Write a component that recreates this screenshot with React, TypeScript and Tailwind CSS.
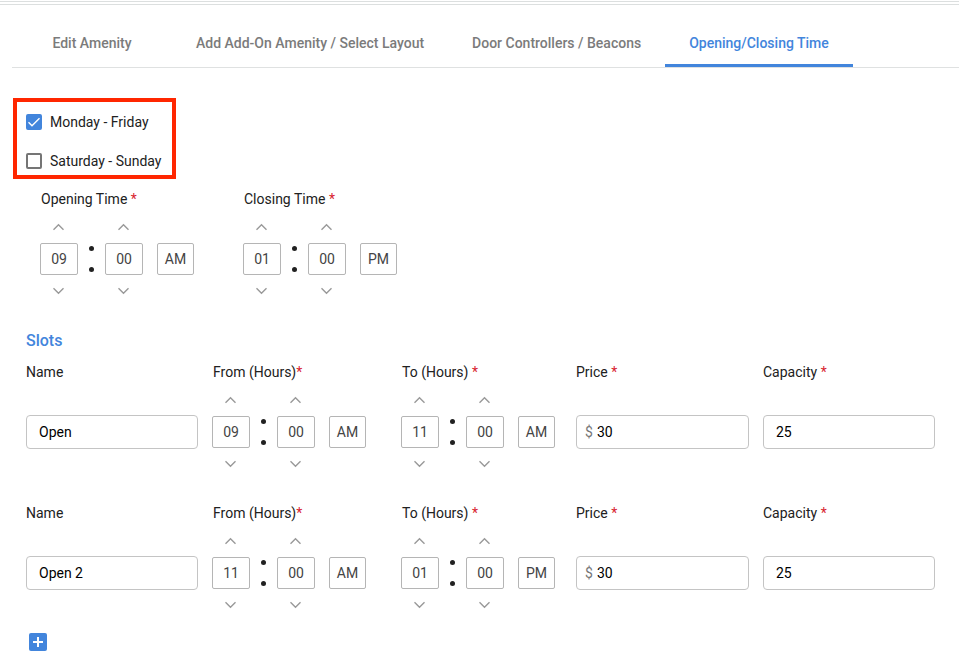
import { useId, useState } from "react"
import clsx from "clsx"

type Time = { hour: string; minute: string; meridiem: "AM" | "PM" }

interface Slot {
  name: string
  from: Time
  to: Time
  price: string
  capacity: string
}

const TABS = [
  "Edit Amenity",
  "Add Add-On Amenity / Select Layout",
  "Door Controllers / Beacons",
  "Opening/Closing Time",
]

const INITIAL_SLOTS: Slot[] = [
  {
    name: "Open",
    from: { hour: "09", minute: "00", meridiem: "AM" },
    to: { hour: "11", minute: "00", meridiem: "AM" },
    price: "30",
    capacity: "25",
  },
  {
    name: "Open 2",
    from: { hour: "11", minute: "00", meridiem: "AM" },
    to: { hour: "01", minute: "00", meridiem: "PM" },
    price: "30",
    capacity: "25",
  },
]

const pad = (n: number) => String(n).padStart(2, "0")

function Chevron({ down }: { down?: boolean }) {
  return (
    <svg width="12" height="8" viewBox="0 0 12 8" fill="none" stroke="#999" strokeWidth="1.4">
      <path d={down ? "M.5 1.3 5.5 6.3 10.5 1.3" : "M.5 6.8 5.5 1.8 10.5 6.8"} />
    </svg>
  )
}

interface SpinnerProps {
  label: string
  value: string
  min: number
  max: number
  onChange: (value: string) => void
}

function Spinner({ label, value, min, max, onChange }: SpinnerProps) {
  const step = (delta: number) => {
    const span = max - min + 1
    onChange(pad(((Number(value) - min + delta + span) % span) + min))
  }

  return (
    <div className="flex w-[38px] flex-col">
      <button
        type="button"
        aria-label={`Increase ${label}`}
        onClick={() => step(1)}
        className="flex h-8 items-center justify-center"
      >
        <Chevron />
      </button>
      <input
        aria-label={label}
        value={value}
        onChange={e => onChange(e.target.value)}
        className="h-8 w-full rounded-xs border border-[#b5b5b5] text-center text-sm text-[#444]"
      />
      <button
        type="button"
        aria-label={`Decrease ${label}`}
        onClick={() => step(-1)}
        className="flex h-8 items-center justify-center"
      >
        <Chevron down />
      </button>
    </div>
  )
}

interface TimeFieldProps {
  label: string
  tight?: boolean
  initial: Time
}

function TimeField({ label, tight, initial }: TimeFieldProps) {
  const [time, setTime] = useState(initial)

  return (
    <div role="group" aria-label={label}>
      <div className="pl-px">
        {label}
        {!tight && " "}
        <Required />
      </div>
      <div className="mt-0.5 flex h-24 items-center">
        <Spinner
          label={`${label} hour`}
          value={time.hour}
          min={1}
          max={12}
          onChange={hour => setTime({ ...time, hour })}
        />
        <div className="flex w-[27px] flex-col items-center gap-4">
          <span className="size-[5px] rounded-full bg-[#212121]" />
          <span className="size-[5px] rounded-full bg-[#212121]" />
        </div>
        <Spinner
          label={`${label} minute`}
          value={time.minute}
          min={0}
          max={59}
          onChange={minute => setTime({ ...time, minute })}
        />
        <button
          type="button"
          onClick={() => setTime({ ...time, meridiem: time.meridiem === "AM" ? "PM" : "AM" })}
          className="ml-3.5 h-8 w-[37px] rounded-xs border border-[#b5b5b5] text-[#444]"
        >
          {time.meridiem}
        </button>
      </div>
    </div>
  )
}

function Required() {
  return <span className="text-[#d8232f]">*</span>
}

interface TextFieldProps {
  label: string
  required?: boolean
  prefix?: string
  initial: string
}

function TextField({ label, required, prefix, initial }: TextFieldProps) {
  const id = useId()
  const [value, setValue] = useState(initial)

  return (
    <div className="pr-3.5">
      <label htmlFor={id} className="block">
        {label} {required && <Required />}
      </label>
      <div className="mt-0.5 flex h-24 items-center">
        <div
          className={clsx(
            "flex h-[34px] w-full items-center gap-1 rounded-sm border border-[#c4c4c4]",
            prefix ? "px-2" : "px-3"
          )}
        >
          {prefix && <span className="text-[#777]">{prefix}</span>}
          <input
            id={id}
            value={value}
            onChange={e => setValue(e.target.value)}
            className="w-full min-w-0 text-black outline-none"
          />
        </div>
      </div>
    </div>
  )
}

function Checkbox({ label, defaultChecked }: { label: string; defaultChecked?: boolean }) {
  return (
    <label className="flex h-[18px] items-center gap-2">
      <span className="grid size-4">
        <input
          type="checkbox"
          defaultChecked={defaultChecked}
          className="peer col-start-1 row-start-1 size-4 appearance-none rounded-xs border-2 border-[#757575] checked:border-[#4285dc] checked:bg-[#4285dc]"
        />
        <svg
          viewBox="0 0 16 16"
          fill="none"
          stroke="white"
          strokeWidth="1.4"
          className="pointer-events-none invisible col-start-1 row-start-1 size-4 peer-checked:visible"
        >
          <path d="M2.5 8.2 6 11.7 13.5 4.2" />
        </svg>
      </span>
      {label}
    </label>
  )
}

export default function App() {
  const [activeTab, setActiveTab] = useState(3)
  const [slots, setSlots] = useState(INITIAL_SLOTS)

  const handleAddSlot = () => {
    setSlots(prev => [...prev, { ...prev[prev.length - 1], name: "" }])
  }

  return (
    <div className="min-h-screen bg-white pt-px font-[Roboto,sans-serif] text-sm text-[#212121]">
      <div className="h-1 border-y border-[#dcdfdf]" />

      {/* Tabs */}
      <nav className="mt-3.5 ml-3 flex border-b border-[#dfe1e1]">
        {TABS.map((tab, index) => (
          <button
            key={tab}
            type="button"
            onClick={() => setActiveTab(index)}
            className={clsx(
              "h-12 min-w-40 border-b-3 px-6 pt-0.5 font-medium whitespace-nowrap",
              index === activeTab
                ? "border-[#4285dc] text-[#4285dc]"
                : "border-transparent text-[#7b7b7b]"
            )}
          >
            {tab}
          </button>
        ))}
      </nav>

      <main className="pt-[30px] pr-2.5 pl-[26px]">
        {/* Days */}
        <div className="-ml-[13px] flex w-[163px] flex-col gap-[21px] border-4 border-[#ff2600] px-[9px] pt-[11px] pb-[5px]">
          <Checkbox label="Monday - Friday" defaultChecked />
          <Checkbox label="Saturday - Sunday" />
        </div>

        {/* Opening hours */}
        <div className="mt-2.5 ml-3.5 flex gap-[49px]">
          <TimeField
            label="Opening Time"
            initial={{ hour: "09", minute: "00", meridiem: "AM" }}
          />
          <TimeField
            label="Closing Time"
            initial={{ hour: "01", minute: "00", meridiem: "PM" }}
          />
        </div>

        {/* Slots */}
        <h2 className="mt-[22px] mb-[9px] text-base font-medium text-[#4285dc]">Slots</h2>
        <div className="flex flex-col gap-[23px]">
          {slots.map((slot, index) => (
            <div key={index} className="grid grid-cols-[186fr_189fr_175fr_187fr_186fr]">
              <TextField label="Name" initial={slot.name} />
              <TimeField label="From (Hours)" tight initial={slot.from} />
              <TimeField label="To (Hours)" initial={slot.to} />
              <TextField label="Price" required prefix="$" initial={slot.price} />
              <TextField label="Capacity" required initial={slot.capacity} />
            </div>
          ))}
        </div>

        <button
          type="button"
          aria-label="Add slot"
          onClick={handleAddSlot}
          className="mt-3 ml-[3px] block"
        >
          <svg width="18" height="18" viewBox="0 0 18 18">
            <rect width="18" height="18" rx="2" fill="#4285dc" />
            <path d="M9 4v10M4 9h10" stroke="white" strokeWidth="2" />
          </svg>
        </button>
      </main>
    </div>
  )
}
